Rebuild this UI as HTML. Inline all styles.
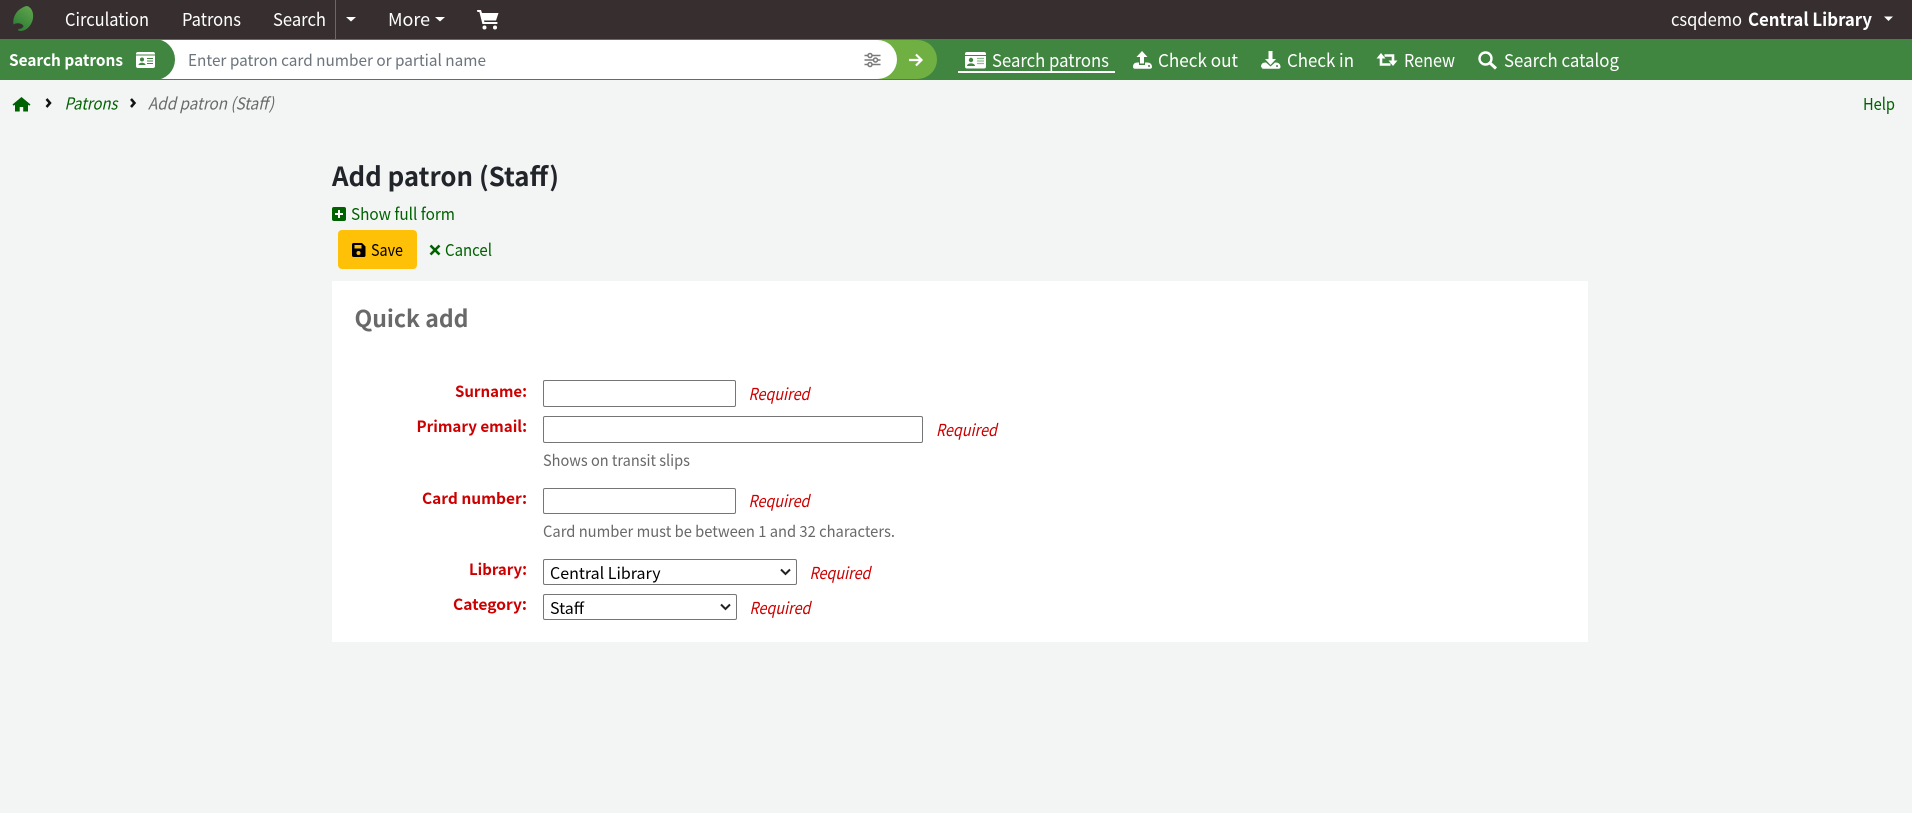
<!DOCTYPE html>
<html lang="en"><head><meta charset="utf-8"><title>Add patron (Staff)</title>
<style>
html,body{margin:0;padding:0;width:1912px;height:813px;overflow:hidden;background:#f3f4f4}
body{position:relative;font-family:"Noto Sans CJK JP","Liberation Sans",sans-serif}
.b{position:absolute}
svg.o{position:absolute;left:0;top:0;pointer-events:none}
svg.o text{font-family:"Noto Sans CJK JP","Liberation Sans",sans-serif}
input,select{position:absolute;box-sizing:border-box;background:#fff;border:1px solid #767676;border-radius:2px;margin:0;padding:0 0 0 4px;font-family:"Noto Sans CJK JP","Liberation Sans",sans-serif;font-size:16px;color:#000}
select{appearance:none;-webkit-appearance:none;padding:0 0 0 6px;line-height:22px}
</style></head><body>
<div class="b" style="left:0;top:0;width:1912px;height:39px;background:#362e2f"></div>
<div class="b" style="left:0;top:39px;width:1912px;height:41px;background:#408540"></div>
<div class="b" style="left:335px;top:0;width:1px;height:39px;background:#408540"></div>
<div class="b" style="left:120px;top:40px;width:817px;height:39px;background:#70b043;border-radius:0 20px 20px 0"></div>
<div class="b" style="left:120px;top:40px;width:777px;height:39px;background:#fff;border-radius:0 20px 20px 0"></div>
<div class="b" style="left:0;top:39px;width:175px;height:41px;background:#408540;border-radius:0 21px 21px 0"></div>
<div class="b" style="left:332px;top:281px;width:1256px;height:361px;background:#fff"></div>
<div class="b" style="left:338px;top:230px;width:79px;height:39px;background:#ffc107;border-radius:4px"></div>
<input type="text" style="left:543px;top:380px;width:193px;height:27px">
<input type="text" style="left:543px;top:416px;width:380px;height:27px">
<input type="text" style="left:543px;top:488px;width:193px;height:26px">
<select style="left:543px;top:559px;width:254px;height:26px"><option>Central Library</option></select>
<select style="left:543px;top:594px;width:194px;height:26px"><option>Staff</option></select>
<svg class="o" width="1912" height="813" viewBox="0 0 1912 813" xmlns="http://www.w3.org/2000/svg">
<defs><linearGradient id="g" x1="0.8" y1="0" x2="0.2" y2="1"><stop offset="0" stop-color="#5fa44c"/><stop offset="1" stop-color="#2c7a35"/></linearGradient></defs>
<path d="M27 6C31 7 34 12 33 18.500C31.500 26 26 31 20.500 31C18.500 31 17.500 30 18.500 29C21 29 23.500 27.500 23.500 26C22.500 23.500 17 22 13.500 24.500C12.500 19 15 13 19.500 9.500C22.500 7.500 25 6 27 6Z" fill="url(#g)"/>
<g font-size="18" fill="#fff">
<text x="65" y="26" textLength="84" lengthAdjust="spacingAndGlyphs">Circulation</text>
<text x="182" y="26" textLength="59" lengthAdjust="spacingAndGlyphs">Patrons</text>
<text x="273" y="26" textLength="53" lengthAdjust="spacingAndGlyphs">Search</text>
<text x="388" y="26" textLength="42" lengthAdjust="spacingAndGlyphs">More</text>
<text x="1671" y="26" textLength="71" lengthAdjust="spacingAndGlyphs">csqdemo</text>
<text x="1748" y="26" font-weight="700" textLength="124" lengthAdjust="spacingAndGlyphs">Central Library</text>
</g>
<path d="M346 17h10l-5 4.500zM435 17h10l-5 4.500zM1884 16.500h9l-4.500 4.500z" fill="#fff"/>
<g fill="#fff"><path d="M477 10h4l1 3h16.500l-2.500 7.500h-12l.4 1.500h13v2h-15l-3-12h-2z"/><circle cx="484.500" cy="27.500" r="2"/><circle cx="495" cy="27.500" r="2"/></g>

<text x="9" y="66" font-size="16" font-weight="700" fill="#fff" textLength="114" lengthAdjust="spacingAndGlyphs">Search patrons</text>
<rect x="136" y="52" width="19" height="16" rx="2" fill="#fff"/>
<path d="M136 55h19" stroke="#408540" stroke-width="1"/>
<circle cx="142" cy="59.500" r="2" fill="#408540"/><path d="M138.500 65c0-3 7-3 7 0z" fill="#408540"/><path d="M147 58.500h6M147 61h6M147 63.500h6" stroke="#408540" stroke-width="1"/>
<text x="188" y="66" font-size="16" fill="#6c757d" textLength="298" lengthAdjust="spacingAndGlyphs">Enter patron card number or partial name</text>
<g stroke="#7a7a7a" stroke-width="1.500" fill="#fff"><path d="M864.500 55.500h16M864.500 60h16M864.500 64.500h16" fill="none"/><circle cx="870" cy="55.500" r="2"/><circle cx="875.500" cy="60" r="2"/><circle cx="870" cy="64.500" r="2"/></g>
<path d="M909 60h12.500M916 54.500l5.500 5.500-5.500 5.500" fill="none" stroke="#fff" stroke-width="2.200"/>

<rect x="958" y="71" width="157" height="2" fill="#fff"/>
<rect x="965" y="52" width="21" height="16.500" rx="2" fill="#fff"/><path d="M965 55.500h21" stroke="#408540" stroke-width="1"/>
<circle cx="971" cy="60" r="2.200" fill="#408540"/><path d="M967 66c0-3.500 8-3.500 8 0z" fill="#408540"/><path d="M977 58.500h7M977 61h7M977 63.500h7" stroke="#8fbc8f" stroke-width="1.200"/>
<g font-size="18" fill="#fff">
<text x="992" y="67" textLength="117" lengthAdjust="spacingAndGlyphs">Search patrons</text>
<text x="1158" y="67" textLength="80" lengthAdjust="spacingAndGlyphs">Check out</text>
<text x="1287" y="67" textLength="67" lengthAdjust="spacingAndGlyphs">Check in</text>
<text x="1404" y="67" textLength="51" lengthAdjust="spacingAndGlyphs">Renew</text>
<text x="1504" y="67" textLength="115" lengthAdjust="spacingAndGlyphs">Search catalog</text>
</g>
<path d="M1142 51l-5.500 6h3.500v6.500h4V57h3.500zM1133 67c0-3 1.500-4.500 4.500-4.500h1.500v2.500h6v-2.500h2c3 0 5 1.500 5 4.500 0 1-.8 1.800-2 1.800h-15c-1.200 0-2-.8-2-1.800z" fill="#fff"/><circle cx="1149" cy="66" r="1" fill="#408540"/>
<path d="M1268.500 51h4V59h3.500l-5.500 6-5.500-6h3.500zM1261 67c0-3 1.500-4.500 4.500-4.500h.5l4.500 4 4.500-4h.5c3 0 5 1.500 5 4.500 0 1-.8 1.800-2 1.800h-15c-1.200 0-2-.8-2-1.800z" fill="#fff"/><circle cx="1277" cy="66" r="1" fill="#408540"/>
<path d="M1381 57v7.500h9.500M1384.500 55.500h8.500v7" fill="none" stroke="#fff" stroke-width="2.600"/><path d="M1376.500 58.500l4.500-5.500 4.500 5.500zM1388.500 60.500l4.500 5.500 4.500-5.500z" fill="#fff"/>
<circle cx="1485.500" cy="58.500" r="6" fill="none" stroke="#fff" stroke-width="2.400"/><path d="M1490 63l6 5.500" stroke="#fff" stroke-width="3"/>

<path d="M12.500 104.500l9-7.500 9 7.500-1.200 1.300-1.300-1.100V111.500h-4.800v-4.500h-3.500v4.500H15v-6.800l-1.300 1.100z" fill="#006100"/>
<path d="M46.500 99l3.500 4-3.500 4M131 99l3.500 4-3.500 4" fill="none" stroke="#111" stroke-width="2.500"/>
<text x="64.500" y="109.500" font-size="16.500" font-style="italic" fill="#006100" textLength="53" lengthAdjust="spacingAndGlyphs">Patrons</text>
<text x="148" y="109.500" font-size="16.500" font-style="italic" fill="#696969" textLength="126" lengthAdjust="spacingAndGlyphs">Add patron (Staff)</text>
<text x="1863" y="110" font-size="16.500" fill="#006100" textLength="32" lengthAdjust="spacingAndGlyphs">Help</text>

<text x="332" y="186" font-size="26" font-weight="700" fill="#212529" textLength="227" lengthAdjust="spacingAndGlyphs">Add patron (Staff)</text>
<rect x="332" y="207" width="14" height="14" rx="2" fill="#006100"/><path d="M339 210v8M335 214h8" stroke="#fff" stroke-width="2"/>
<text x="351" y="220" font-size="16.500" fill="#006100" textLength="104" lengthAdjust="spacingAndGlyphs">Show full form</text>
<path d="M353.500 243h8.500l3.500 3.500v9c0 .8-.6 1.500-1.500 1.500h-10.500c-.8 0-1.500-.7-1.500-1.500v-11c0-.8.700-1.500 1.500-1.500z" fill="#000"/><rect x="354.500" y="245" width="7" height="3.500" fill="#ffc107"/><circle cx="358.500" cy="253" r="2" fill="#ffc107"/>
<text x="371" y="256" font-size="16.500" fill="#000" textLength="32" lengthAdjust="spacingAndGlyphs">Save</text>
<path d="M430.500 245.500l9 9M439.500 245.500l-9 9" stroke="#006100" stroke-width="2.600"/>
<text x="445" y="256" font-size="16.500" fill="#006100" textLength="47" lengthAdjust="spacingAndGlyphs">Cancel</text>
<text x="354.500" y="327" font-size="23" font-weight="700" fill="#696969" textLength="114" lengthAdjust="spacingAndGlyphs">Quick add</text>

<g font-size="15.500" font-weight="700" fill="#c00">
<text x="455" y="397" textLength="72" lengthAdjust="spacingAndGlyphs">Surname:</text>
<text x="416.500" y="432" textLength="110.500" lengthAdjust="spacingAndGlyphs">Primary email:</text>
<text x="422" y="504" textLength="105" lengthAdjust="spacingAndGlyphs">Card number:</text>
<text x="469" y="575" textLength="58" lengthAdjust="spacingAndGlyphs">Library:</text>
<text x="453" y="610" textLength="74" lengthAdjust="spacingAndGlyphs">Category:</text>
</g>
<g font-size="16.500" font-style="italic" fill="#c00">
<text x="748.500" y="400" textLength="61" lengthAdjust="spacingAndGlyphs">Required</text>
<text x="936" y="436" textLength="61" lengthAdjust="spacingAndGlyphs">Required</text>
<text x="748.500" y="507" textLength="61" lengthAdjust="spacingAndGlyphs">Required</text>
<text x="809.500" y="579" textLength="61" lengthAdjust="spacingAndGlyphs">Required</text>
<text x="749.500" y="614" textLength="61" lengthAdjust="spacingAndGlyphs">Required</text>
</g>
<g font-size="15.500" fill="#696969">
<text x="543" y="466" textLength="147" lengthAdjust="spacingAndGlyphs">Shows on transit slips</text>
<text x="543" y="537" textLength="352" lengthAdjust="spacingAndGlyphs">Card number must be between 1 and 32 characters.</text>
</g>
<path d="M781 569.500l4.500 4.500 4.500-4.500M721 604.500l4.500 4.500 4.500-4.500" fill="none" stroke="#222" stroke-width="2"/>
</svg>
</body></html>
